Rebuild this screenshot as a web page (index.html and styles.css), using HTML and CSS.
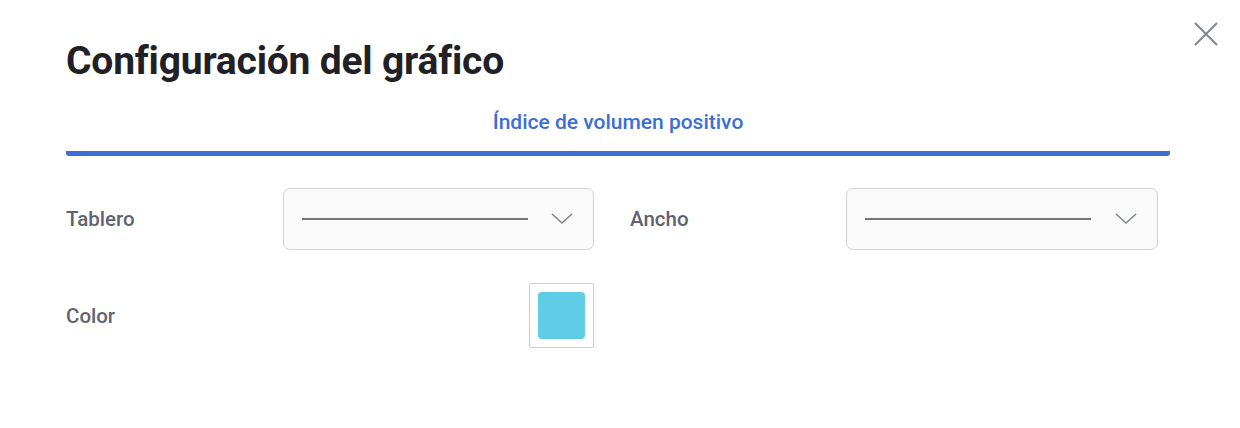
FILE: index.html
```html
<!DOCTYPE html>
<html lang="es">
<head>
    <meta charset="UTF-8">
    <meta name="viewport" content="width=device-width, initial-scale=1.0">
    <title>Configuración del gráfico</title>
    <link rel="stylesheet" href="styles.css">
</head>
<body>
    <div class="dialog">
        <button class="close-btn" aria-label="Cerrar">
            <svg width="26" height="26" viewBox="0 0 26 26">
                <path d="M2 2 L24 24 M24 2 L2 24" stroke="#80868f" stroke-width="2" fill="none"/>
            </svg>
        </button>

        <h1 class="dialog-title">Configuración del gráfico</h1>

        <div class="tabs">
            <div class="tab active">Índice de volumen positivo</div>
        </div>

        <div class="settings">
            <div class="label">Tablero</div>
            <div class="select">
                <span class="line-sample"></span>
                <svg class="chevron" width="22" height="12" viewBox="0 0 22 12">
                    <path d="M1 1 L11 10 L21 1" stroke="#80868f" stroke-width="1.6" fill="none"/>
                </svg>
            </div>

            <div class="label">Ancho</div>
            <div class="select">
                <span class="line-sample"></span>
                <svg class="chevron" width="22" height="12" viewBox="0 0 22 12">
                    <path d="M1 1 L11 10 L21 1" stroke="#80868f" stroke-width="1.6" fill="none"/>
                </svg>
            </div>

            <div class="label">Color</div>
            <div class="color-cell">
                <div class="swatch-box">
                    <div class="swatch"></div>
                </div>
            </div>
        </div>
    </div>
</body>
</html>
```

FILE: styles.css
```css
body {
    margin: 0;
    padding: 0;
    background: #fff;
    font-family: Roboto, "Liberation Sans", sans-serif;
    overflow: hidden;
}

.dialog {
    position: relative;
    width: 1104px;
    padding: 34px 70px 0 66px;
}

.close-btn {
    position: absolute;
    top: 21px;
    right: 21px;
    width: 26px;
    height: 26px;
    padding: 0;
    border: none;
    background: none;
    cursor: pointer;
}

.dialog-title {
    margin: 0;
    font-size: 39px;
    font-weight: 700;
    line-height: 54px;
    color: #1f2126;
    letter-spacing: -0.2px;
}

.tabs {
    display: flex;
    margin-top: 22px;
}

.tab {
    flex: 1;
    text-align: center;
    font-size: 21px;
    font-weight: 500;
    color: #3b6fd6;
    line-height: 24px;
    padding-bottom: 17px;
    border-bottom: 5px solid #3b6fd6;
    border-radius: 0 0 3px 3px;
}

.settings {
    display: grid;
    grid-template-columns: 217px 311px 36px 216px 312px;
    row-gap: 33px;
    margin-top: 32px;
    align-items: center;
}

.settings .label:nth-child(3) {
    grid-column: 4;
}

.label {
    font-size: 20.5px;
    font-weight: 500;
    color: #5f6370;
}

.select {
    display: flex;
    align-items: center;
    height: 62px;
    padding: 0 20px 0 18px;
    border: 1px solid #d2d3d6;
    border-radius: 7px;
    background: #fafafa;
    box-sizing: border-box;
}

.line-sample {
    display: block;
    width: 226px;
    height: 2px;
    background: #747474;
}

.chevron {
    margin-left: auto;
}

.color-cell {
    display: flex;
    justify-content: flex-end;
}

.swatch-box {
    width: 65px;
    height: 65px;
    box-sizing: border-box;
    padding: 8px;
    border: 1px solid #cfcfcf;
    border-radius: 2px;
    background: #fff;
}

.swatch {
    width: 100%;
    height: 100%;
    border-radius: 4px;
    background: #5fcde5;
}
```
